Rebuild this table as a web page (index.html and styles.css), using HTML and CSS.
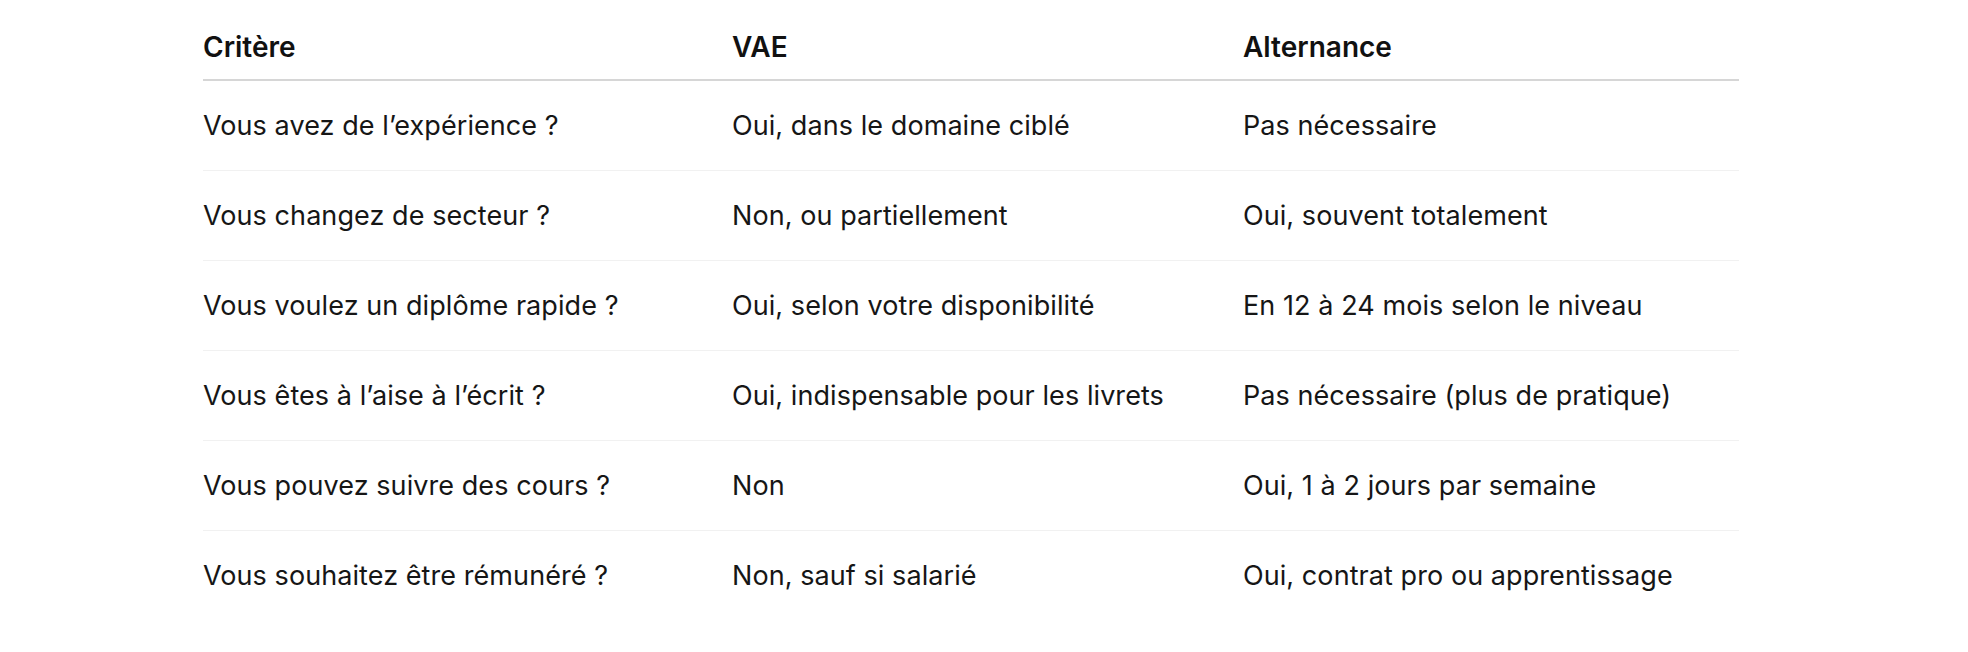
FILE: index.html
```html
<!DOCTYPE html>
<html lang="fr">
<head>
<meta charset="utf-8">
<title>Comparatif VAE / Alternance</title>
<link rel="stylesheet" href="styles.css">
</head>
<body>
<div class="page">
  <div class="table" role="table">
    <div class="row head" role="row">
      <div class="cell" role="columnheader">Critère</div>
      <div class="cell" role="columnheader">VAE</div>
      <div class="cell" role="columnheader">Alternance</div>
    </div>
    <div class="row" role="row">
      <div class="cell">Vous avez de l’expérience ?</div>
      <div class="cell">Oui, dans le domaine ciblé</div>
      <div class="cell">Pas nécessaire</div>
    </div>
    <div class="row" role="row">
      <div class="cell">Vous changez de secteur ?</div>
      <div class="cell">Non, ou partiellement</div>
      <div class="cell">Oui, souvent totalement</div>
    </div>
    <div class="row" role="row">
      <div class="cell">Vous voulez un diplôme rapide ?</div>
      <div class="cell">Oui, selon votre disponibilité</div>
      <div class="cell">En 12 à 24 mois selon le niveau</div>
    </div>
    <div class="row" role="row">
      <div class="cell">Vous êtes à l’aise à l’écrit ?</div>
      <div class="cell">Oui, indispensable pour les livrets</div>
      <div class="cell">Pas nécessaire (plus de pratique)</div>
    </div>
    <div class="row" role="row">
      <div class="cell">Vous pouvez suivre des cours ?</div>
      <div class="cell">Non</div>
      <div class="cell">Oui, 1 à 2 jours par semaine</div>
    </div>
    <div class="row last" role="row">
      <div class="cell">Vous souhaitez être rémunéré ?</div>
      <div class="cell">Non, sauf si salarié</div>
      <div class="cell">Oui, contrat pro ou apprentissage</div>
    </div>
  </div>
</div>
</body>
</html>
```

FILE: styles.css
```css
html, body {
  margin: 0;
  padding: 0;
  background: #ffffff;
}

body {
  font-family: "Inter", "Noto Sans", "Liberation Sans", sans-serif;
  color: #161616;
  font-size: 27px;
  letter-spacing: 0.07px;
}

.page {
  padding: 0 0 0 203px;
}

.table {
  width: 1536px;
}

.row {
  display: grid;
  grid-template-columns: 529px 511px 1fr;
  border-bottom: 1px solid #f1f1f1;
}

.row.last {
  border-bottom: none;
}

.cell {
  line-height: 41px;
  padding: 24px 24px 24px 0;
}

.row.head {
  border-bottom: 2px solid #d6d6d6;
}

.row.head .cell {
  font-size: 28px;
  font-weight: 600;
  letter-spacing: 0;
  line-height: 42px;
  padding: 26px 24px 11px 0;
  color: #111111;
}
```
